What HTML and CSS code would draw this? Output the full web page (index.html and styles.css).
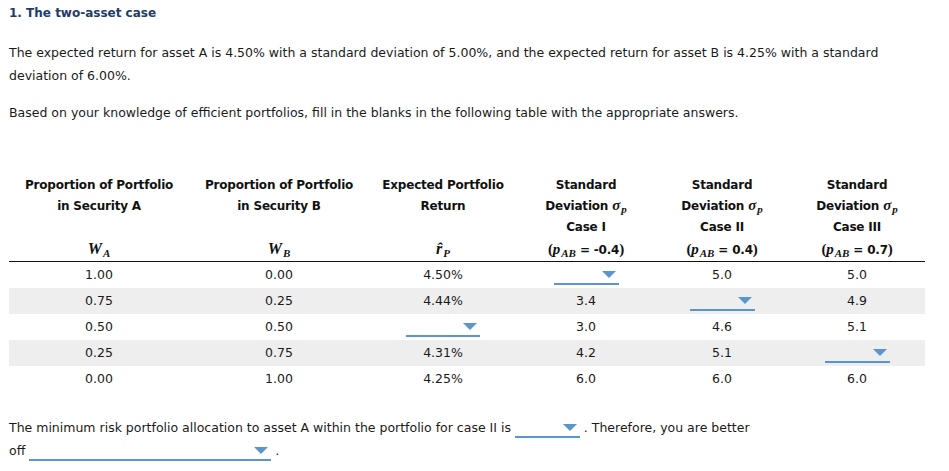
FILE: index.html
```html
<!DOCTYPE html>
<html>
<head>
<meta charset="utf-8">
<link rel="stylesheet" href="styles.css">
</head>
<body>
<div class="page">
  <h1 class="title">1. The two-asset case</h1>
  <p class="text">The expected return for asset A is 4.50% with a standard deviation of 5.00%, and the expected return for asset B is 4.25% with a standard deviation of 6.00%.</p>
  <p class="text">Based on your knowledge of efficient portfolios, fill in the blanks in the following table with the appropriate answers.</p>
  <table class="grid">
    <colgroup>
      <col class="c1"><col class="c2"><col class="c3"><col class="c4"><col class="c5"><col class="c6">
    </colgroup>
    <thead>
      <tr class="head-text">
        <th>Proportion of Portfolio<br>in Security A</th>
        <th>Proportion of Portfolio<br>in Security B</th>
        <th>Expected Portfolio<br>Return</th>
        <th>Standard<br>Deviation <span class="m">σ<sub>p</sub></span><br>Case I</th>
        <th>Standard<br>Deviation <span class="m">σ<sub>p</sub></span><br>Case II</th>
        <th>Standard<br>Deviation <span class="m">σ<sub>p</sub></span><br>Case III</th>
      </tr>
      <tr class="head-math">
        <th><span class="m big">W<sub>A</sub></span></th>
        <th><span class="m big">W<sub>B</sub></span></th>
        <th><span class="m big">r̂<sub>P</sub></span></th>
        <th><span class="paren">(</span><span class="m">p<sub>AB</sub></span> = -0.4<span class="paren">)</span></th>
        <th><span class="paren">(</span><span class="m">p<sub>AB</sub></span> = 0.4<span class="paren">)</span></th>
        <th><span class="paren">(</span><span class="m">p<sub>AB</sub></span> = 0.7<span class="paren">)</span></th>
      </tr>
    </thead>
    <tbody>
      <tr><td>1.00</td><td>0.00</td><td>4.50%</td><td><span class="dd"></span></td><td>5.0</td><td>5.0</td></tr>
      <tr class="alt"><td>0.75</td><td>0.25</td><td>4.44%</td><td>3.4</td><td><span class="dd"></span></td><td>4.9</td></tr>
      <tr><td>0.50</td><td>0.50</td><td><span class="dd dd-mid"></span></td><td>3.0</td><td>4.6</td><td>5.1</td></tr>
      <tr class="alt"><td>0.25</td><td>0.75</td><td>4.31%</td><td>4.2</td><td>5.1</td><td><span class="dd"></span></td></tr>
      <tr><td>0.00</td><td>1.00</td><td>4.25%</td><td>6.0</td><td>6.0</td><td>6.0</td></tr>
    </tbody>
  </table>
  <p class="text closing">The minimum risk portfolio allocation to asset A within the portfolio for case II is <span class="dd"></span> . Therefore, you are better <span class="nowrap">off <span class="dd dd-wide"></span> .</span></p>
</div>
</body>
</html>
```

FILE: styles.css
```css
body {
  margin: 0;
  background: #ffffff;
  color: #1a1a1a;
  font-family: "DejaVu Sans", Verdana, sans-serif;
  font-size: 12.5px;
}

.page {
  width: 916px;
  padding: 3px 9px 0;
}

.title {
  margin: 0;
  font-size: 12px;
  line-height: 20px;
  font-weight: bold;
  color: #1d3b6b;
}

.text {
  margin: 18px 0 0;
  line-height: 23px;
}

.text + .text {
  margin-top: 14px;
}

.grid {
  margin-top: 51px;
  width: 916px;
  border-collapse: collapse;
  table-layout: fixed;
}

.c1 { width: 180px; }
.c2 { width: 180px; }
.c3 { width: 148px; }
.c4 { width: 138px; }
.c5 { width: 134px; }
.c6 { width: 136px; }

.grid th {
  padding: 0;
  font-weight: bold;
  font-size: 12px;
  letter-spacing: -0.2px;
  text-align: center;
  color: #111111;
}

.head-text th {
  vertical-align: top;
  height: 63px;
  line-height: 21px;
}

.head-math th {
  height: 23px;
  line-height: 16px;
  vertical-align: middle;
  border-bottom: 1px solid #111111;
}

.m {
  font-family: "Liberation Serif", "Times New Roman", serif;
  font-style: italic;
  font-weight: bold;
  font-size: 15px;
  line-height: 14px;
  letter-spacing: 0;
}

.m.big {
  font-size: 16px;
}

.m sub {
  font-size: 11px;
  vertical-align: -3px;
  line-height: 0;
  margin-left: 1px;
}

.paren {
  font-family: "Liberation Serif", "Times New Roman", serif;
  font-size: 15px;
  line-height: 14px;
}

.grid td {
  padding: 0;
  height: 26px;
  line-height: 26px;
  text-align: center;
  vertical-align: middle;
}

.alt td {
  background: #eeeeee;
}

.dd {
  display: inline-block;
  position: relative;
  width: 65px;
  height: 16px;
  border-bottom: 2px solid #5b95cb;
  vertical-align: -6px;
}

.dd::after {
  content: "";
  position: absolute;
  right: 3px;
  bottom: 5px;
  border-left: 7px solid transparent;
  border-right: 7px solid transparent;
  border-top: 7px solid #5b95cb;
}

.dd-mid {
  width: 74px;
}

.dd-wide {
  width: 242px;
}

.closing {
  margin-top: 24px;
}

.nowrap {
  white-space: nowrap;
}
```
